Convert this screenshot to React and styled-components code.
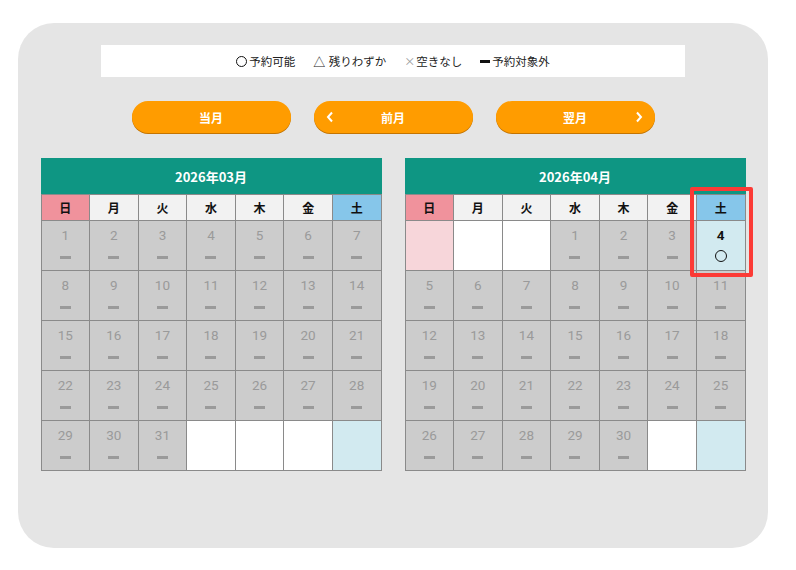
import React from 'react';
import styled, { createGlobalStyle } from 'styled-components';

const GlobalStyle = createGlobalStyle`
  body {
    margin: 0;
    background: #fff;
    font-family: "Noto Sans CJK JP", "Noto Sans", sans-serif;
  }
`;

const Panel = styled.div`
  position: relative;
  box-sizing: border-box;
  width: 750px;
  height: 525px;
  margin: 23px 0 0 18px;
  padding-top: 22px;
  background: #e5e5e5;
  border-radius: 36px;
  display: flex;
  flex-direction: column;
  align-items: center;
`;

const Legend = styled.div`
  width: 584px;
  height: 32px;
  background: #fff;
  display: flex;
  align-items: center;
  justify-content: center;
  gap: 18px;
  font-size: 11.5px;
  color: #222;
`;

const LegendItem = styled.span`
  display: flex;
  align-items: center;
  gap: 1px;
`;

const Ring = styled.span`
  display: inline-block;
  width: 9px;
  height: 9px;
  border: 1.6px solid #111;
  border-radius: 50%;
  margin-right: 1px;
`;

const Mark = styled.span`
  color: ${(p) => p.$color || '#222'};
  font-size: ${(p) => p.$size || '12px'};
`;

const Bar = styled.span`
  display: inline-block;
  width: 10px;
  height: 3px;
  background: #111;
  margin-right: 1px;
`;

const ButtonRow = styled.div`
  display: flex;
  gap: 23px;
  margin-top: 24px;
`;

const NavButton = styled.button`
  position: relative;
  width: 159px;
  height: 32px;
  border: none;
  border-radius: 16px;
  background: #ff9c00;
  box-shadow: 0 1px 0 #c47400;
  color: #fff;
  font-family: inherit;
  font-weight: 700;
  font-size: 12px;
  display: flex;
  align-items: center;
  justify-content: center;
  padding: 0;
`;

const Chevron = styled.svg`
  position: absolute;
  top: 10px;
  ${(p) => (p.$side === 'left' ? 'left: 12px;' : 'right: 12px;')}
`;

const Calendars = styled.div`
  display: flex;
  gap: 23px;
  margin-top: 25px;
`;

const Calendar = styled.div`
  position: relative;
  width: 341px;
`;

const MonthTitle = styled.div`
  height: 36px;
  background: #0e9683;
  color: #fff;
  font-weight: 700;
  font-size: 13px;
  display: flex;
  align-items: center;
  justify-content: center;
`;

const Grid = styled.div`
  display: grid;
  grid-template-columns: repeat(7, 1fr);
  grid-template-rows: 25px repeat(5, 49px);
  gap: 1px;
  padding: 1px;
  background: #8a8a8a;
`;

const DayHead = styled.div`
  background: ${(p) => p.$bg};
  display: flex;
  align-items: center;
  justify-content: center;
  font-size: 12px;
  font-weight: 700;
  color: #111;
`;

const Cell = styled.div`
  background: ${(p) => p.$bg};
  display: flex;
  flex-direction: column;
  align-items: center;
  padding-top: 7px;
  box-sizing: border-box;
`;

const DateNum = styled.span`
  font-family: Roboto, "Noto Sans CJK JP", sans-serif;
  font-size: 13.5px;
  line-height: 15px;
  color: ${(p) => (p.$open ? '#111' : '#9a9a9a')};
  font-weight: ${(p) => (p.$open ? 700 : 400)};
`;

const Dash = styled.span`
  display: block;
  width: 11px;
  height: 3px;
  margin-top: 13px;
  background: #9a9a9a;
`;

const OpenMark = styled.span`
  display: block;
  width: 10px;
  height: 10px;
  margin-top: 7px;
  border: 1.2px solid #111;
  border-radius: 50%;
`;

const Highlight = styled.div`
  position: absolute;
  left: 285px;
  top: 29px;
  width: 63px;
  height: 90px;
  box-sizing: border-box;
  border: 4px solid #fc3a35;
  border-radius: 2px;
  pointer-events: none;
`;

const days = [
  { label: '日', bg: '#f0929c' },
  { label: '月', bg: '#f2f2f2' },
  { label: '火', bg: '#f2f2f2' },
  { label: '水', bg: '#f2f2f2' },
  { label: '木', bg: '#f2f2f2' },
  { label: '金', bg: '#f2f2f2' },
  { label: '土', bg: '#86c6ea' },
];

const emptyBg = (col) => (col === 0 ? '#f7d6da' : col === 6 ? '#d2eaf0' : '#fff');

// build 35 cells for a month starting on weekday `start`
const buildCells = (start, total, openDays = []) =>
  Array.from({ length: 35 }, (_, i) => {
    const day = i - start + 1;
    const col = i % 7;
    if (day < 1 || day > total) return { key: i, empty: true, bg: emptyBg(col) };
    const open = openDays.includes(day);
    return { key: i, day, open, bg: open ? '#d2eaf0' : '#cccccc' };
  });

const months = [
  { title: '2026年03月', cells: buildCells(0, 31) },
  { title: '2026年04月', cells: buildCells(3, 30, [4]), highlight: true },
];

const MonthCalendar = ({ title, cells, highlight }) => (
  <Calendar>
    <MonthTitle>{title}</MonthTitle>
    <Grid>
      {days.map((d) => (
        <DayHead key={d.label} $bg={d.bg}>{d.label}</DayHead>
      ))}
      {cells.map((c) => (
        <Cell key={c.key} $bg={c.bg}>
          {!c.empty && (
            <>
              <DateNum $open={c.open}>{c.day}</DateNum>
              {c.open ? <OpenMark /> : <Dash />}
            </>
          )}
        </Cell>
      ))}
    </Grid>
    {highlight && <Highlight />}
  </Calendar>
);

const App = () => (
  <>
    <GlobalStyle />
    <Panel>
      <Legend>
        <LegendItem><Ring />予約可能</LegendItem>
        <LegendItem><Mark>△</Mark>&nbsp;残りわずか</LegendItem>
        <LegendItem><Mark $color="#999" $size="11px">×</Mark>空きなし</LegendItem>
        <LegendItem><Bar />予約対象外</LegendItem>
      </Legend>
      <ButtonRow>
        <NavButton>当月</NavButton>
        <NavButton>
          <Chevron $side="left" width="8" height="12" viewBox="0 0 8 12">
            <path d="M6 1.5 L2 6 L6 10.5" stroke="#fff" strokeWidth="2" fill="none" />
          </Chevron>
          前月
        </NavButton>
        <NavButton>
          翌月
          <Chevron $side="right" width="8" height="12" viewBox="0 0 8 12">
            <path d="M2 1.5 L6 6 L2 10.5" stroke="#fff" strokeWidth="2" fill="none" />
          </Chevron>
        </NavButton>
      </ButtonRow>
      <Calendars>
        {months.map((m) => (
          <MonthCalendar key={m.title} {...m} />
        ))}
      </Calendars>
    </Panel>
  </>
);

export default App;
